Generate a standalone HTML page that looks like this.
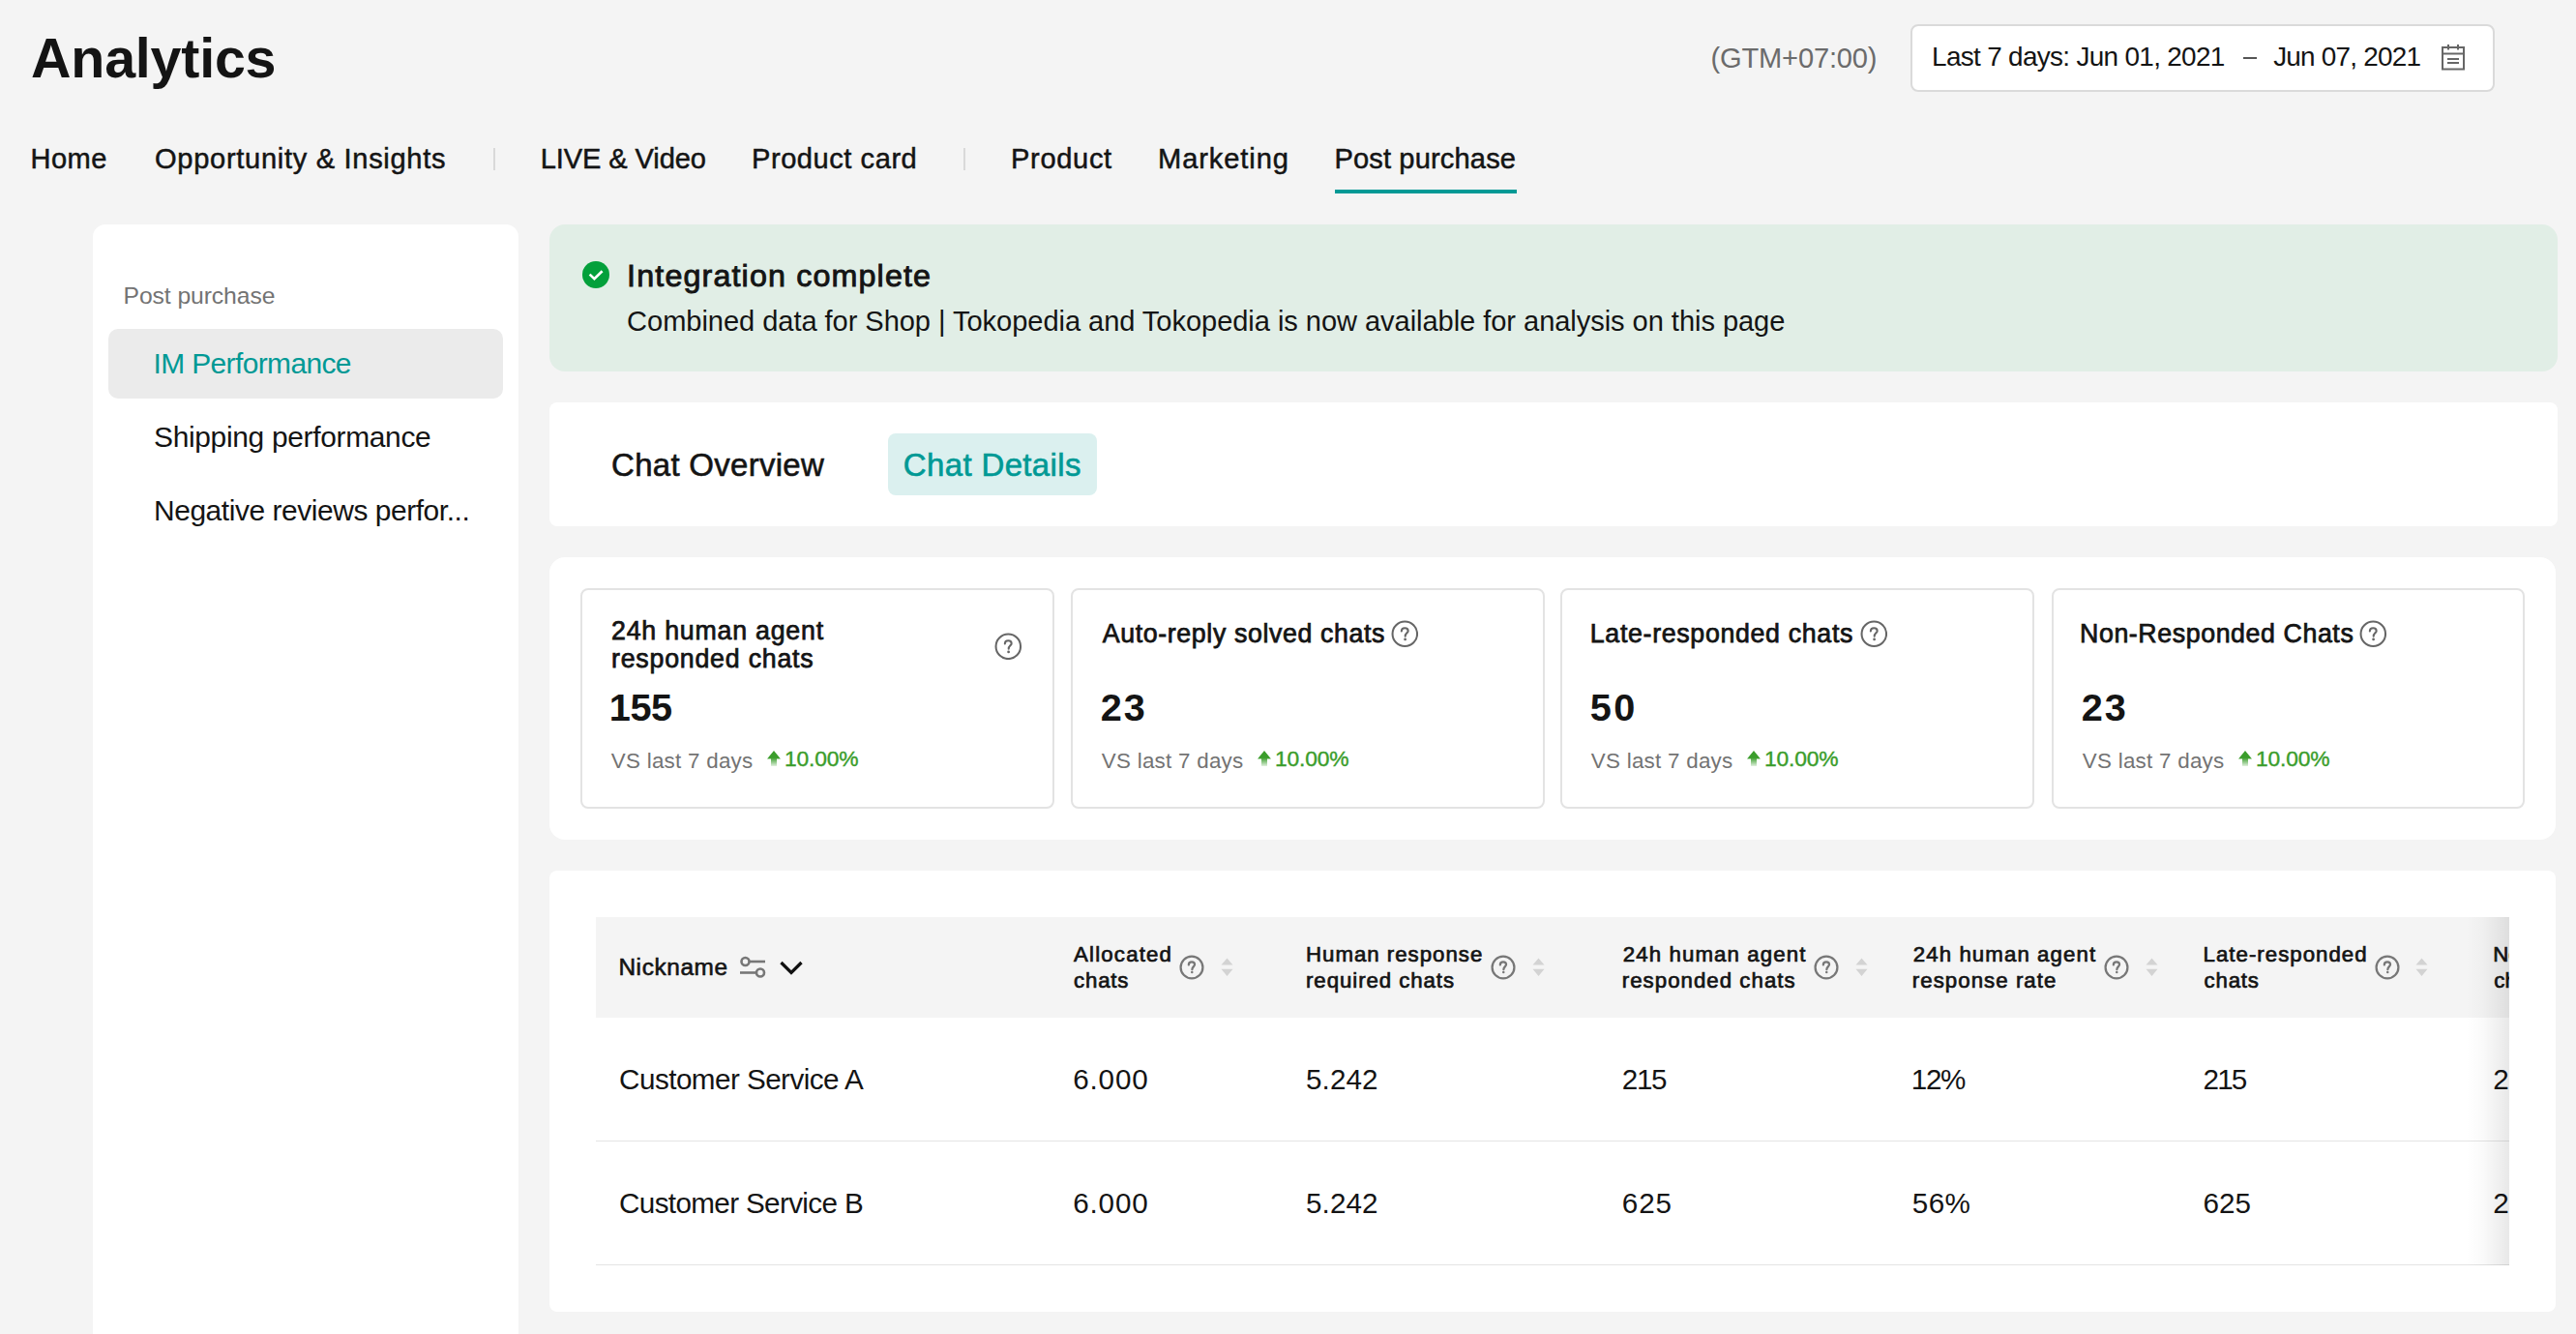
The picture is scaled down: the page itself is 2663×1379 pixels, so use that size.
<!DOCTYPE html>
<html><head><meta charset="utf-8"><style>
html,body{margin:0;padding:0;}
body{width:2663px;height:1379px;overflow:hidden;background:#f4f4f4;position:relative;font-family:"Liberation Sans",sans-serif;}
.t{white-space:nowrap;}
#clip{position:absolute;left:0;top:0;width:2594px;height:1379px;overflow:hidden;}
</style></head><body>
<div style="position:absolute;left:1975px;top:25px;width:604px;height:70px;background:#fff;border-radius:8px;box-sizing:border-box;border:2px solid #dadada;"></div>
<div style="position:absolute;left:2319px;top:59px;width:14px;height:2px;background:#555;border-radius:0px;"></div>
<svg style="position:absolute;left:2523px;top:45px" width="27" height="28" viewBox="0 0 27 28"><g fill="none" stroke="#666" stroke-width="2"><rect x="2" y="4" width="22" height="22.5"/><line x1="2" y1="10.5" x2="24" y2="10.5"/><line x1="8" y1="1" x2="8" y2="6.5"/><line x1="18" y1="1" x2="18" y2="6.5"/><line x1="7" y1="16" x2="19" y2="16"/><line x1="7" y1="20" x2="19" y2="20"/></g></svg>
<div style="position:absolute;left:510px;top:153px;width:2px;height:23px;background:#d9d9d9;border-radius:0px;"></div>
<div style="position:absolute;left:996px;top:153px;width:2px;height:23px;background:#d9d9d9;border-radius:0px;"></div>
<div style="position:absolute;left:1380px;top:196px;width:188px;height:4px;background:#009995;border-radius:0px;"></div>
<div style="position:absolute;left:96px;top:232px;width:440px;height:1300px;background:#fff;border-radius:13px;"></div>
<div style="position:absolute;left:112px;top:340px;width:408px;height:72px;background:#ebebeb;border-radius:10px;"></div>
<div style="position:absolute;left:568px;top:232px;width:2076px;height:152px;background:#e1eee6;border-radius:16px;"></div>
<svg style="position:absolute;left:602px;top:270px" width="28" height="28" viewBox="0 0 28 28"><circle cx="14" cy="14" r="14" fill="#03a03b"/><path d="M7.6 13.6 L12.4 18.2 L20.6 10.2" fill="none" stroke="#fff" stroke-width="2.6"/></svg>
<div style="position:absolute;left:568px;top:416px;width:2076px;height:128px;background:#fff;border-radius:8px;"></div>
<div style="position:absolute;left:918px;top:448px;width:216px;height:64px;background:#dbf0ef;border-radius:8px;"></div>
<div style="position:absolute;left:568px;top:576px;width:2074px;height:292px;background:#fff;border-radius:16px;"></div>
<div style="position:absolute;left:600px;top:608px;width:490px;height:228px;background:#fff;border-radius:8px;box-sizing:border-box;border:2px solid #e3e3e3;"></div>
<svg style="position:absolute;left:792px;top:775px" width="16" height="18" viewBox="0 0 16 18"><defs><linearGradient id="ag0" x1="0" y1="0" x2="0" y2="1"><stop offset="0.45" stop-color="#3a9d2b"/><stop offset="1" stop-color="#3a9d2b" stop-opacity="0.15"/></linearGradient></defs><path d="M8 1 L15 9.5 L11 9.5 L11 17 L5 17 L5 9.5 L1 9.5 Z" fill="url(#ag0)"/></svg>
<div style="position:absolute;left:1107px;top:608px;width:490px;height:228px;background:#fff;border-radius:8px;box-sizing:border-box;border:2px solid #e3e3e3;"></div>
<svg style="position:absolute;left:1299px;top:775px" width="16" height="18" viewBox="0 0 16 18"><defs><linearGradient id="ag1" x1="0" y1="0" x2="0" y2="1"><stop offset="0.45" stop-color="#3a9d2b"/><stop offset="1" stop-color="#3a9d2b" stop-opacity="0.15"/></linearGradient></defs><path d="M8 1 L15 9.5 L11 9.5 L11 17 L5 17 L5 9.5 L1 9.5 Z" fill="url(#ag1)"/></svg>
<div style="position:absolute;left:1613px;top:608px;width:490px;height:228px;background:#fff;border-radius:8px;box-sizing:border-box;border:2px solid #e3e3e3;"></div>
<svg style="position:absolute;left:1805px;top:775px" width="16" height="18" viewBox="0 0 16 18"><defs><linearGradient id="ag2" x1="0" y1="0" x2="0" y2="1"><stop offset="0.45" stop-color="#3a9d2b"/><stop offset="1" stop-color="#3a9d2b" stop-opacity="0.15"/></linearGradient></defs><path d="M8 1 L15 9.5 L11 9.5 L11 17 L5 17 L5 9.5 L1 9.5 Z" fill="url(#ag2)"/></svg>
<div style="position:absolute;left:2121px;top:608px;width:489px;height:228px;background:#fff;border-radius:8px;box-sizing:border-box;border:2px solid #e3e3e3;"></div>
<svg style="position:absolute;left:2313px;top:775px" width="16" height="18" viewBox="0 0 16 18"><defs><linearGradient id="ag3" x1="0" y1="0" x2="0" y2="1"><stop offset="0.45" stop-color="#3a9d2b"/><stop offset="1" stop-color="#3a9d2b" stop-opacity="0.15"/></linearGradient></defs><path d="M8 1 L15 9.5 L11 9.5 L11 17 L5 17 L5 9.5 L1 9.5 Z" fill="url(#ag3)"/></svg>
<svg style="position:absolute;left:1028.2px;top:653.7px" width="28.6" height="28.6" viewBox="0 0 28 28"><circle cx="14" cy="14" r="12.50" fill="none" stroke="#666" stroke-width="2"/><path d="M10.6 11.2 C10.6 9.2 12.1 8 14 8 C15.9 8 17.3 9.2 17.3 10.9 C17.3 12.9 14.4 13.4 14.4 16.3" fill="none" stroke="#666" stroke-width="2" stroke-linecap="round"/><circle cx="14.3" cy="19.5" r="1.35" fill="#666"/></svg>
<svg style="position:absolute;left:1437.9px;top:641.3px" width="28.6" height="28.6" viewBox="0 0 28 28"><circle cx="14" cy="14" r="12.50" fill="none" stroke="#666" stroke-width="2"/><path d="M10.6 11.2 C10.6 9.2 12.1 8 14 8 C15.9 8 17.3 9.2 17.3 10.9 C17.3 12.9 14.4 13.4 14.4 16.3" fill="none" stroke="#666" stroke-width="2" stroke-linecap="round"/><circle cx="14.3" cy="19.5" r="1.35" fill="#666"/></svg>
<svg style="position:absolute;left:1922.8px;top:641.3px" width="28.6" height="28.6" viewBox="0 0 28 28"><circle cx="14" cy="14" r="12.50" fill="none" stroke="#666" stroke-width="2"/><path d="M10.6 11.2 C10.6 9.2 12.1 8 14 8 C15.9 8 17.3 9.2 17.3 10.9 C17.3 12.9 14.4 13.4 14.4 16.3" fill="none" stroke="#666" stroke-width="2" stroke-linecap="round"/><circle cx="14.3" cy="19.5" r="1.35" fill="#666"/></svg>
<svg style="position:absolute;left:2439.1px;top:641.3px" width="28.6" height="28.6" viewBox="0 0 28 28"><circle cx="14" cy="14" r="12.50" fill="none" stroke="#666" stroke-width="2"/><path d="M10.6 11.2 C10.6 9.2 12.1 8 14 8 C15.9 8 17.3 9.2 17.3 10.9 C17.3 12.9 14.4 13.4 14.4 16.3" fill="none" stroke="#666" stroke-width="2" stroke-linecap="round"/><circle cx="14.3" cy="19.5" r="1.35" fill="#666"/></svg>
<div style="position:absolute;left:568px;top:900px;width:2074px;height:456px;background:#fff;border-radius:8px;"></div>
<div style="position:absolute;left:616px;top:948px;width:1978px;height:104px;background:#f4f4f4;border-radius:0px;"></div>
<div style="position:absolute;left:616px;top:1179px;width:1978px;height:1px;background:#e4e4e4;border-radius:0px;"></div>
<div style="position:absolute;left:616px;top:1307px;width:1978px;height:1px;background:#e4e4e4;border-radius:0px;"></div>
<svg style="position:absolute;left:763px;top:987px" width="30" height="26" viewBox="0 0 30 26"><g fill="none" stroke="#777" stroke-width="2.6"><circle cx="7.5" cy="7" r="4"/><line x1="11.5" y1="7" x2="28" y2="7"/><circle cx="23" cy="18.5" r="4"/><line x1="2" y1="18.5" x2="19" y2="18.5"/></g></svg>
<svg style="position:absolute;left:805px;top:992px" width="26" height="17" viewBox="0 0 26 17"><path d="M2.5 3 L13 13.5 L23.5 3" fill="none" stroke="#111" stroke-width="3.3"/></svg>
<svg style="position:absolute;left:1219.0px;top:987.0px" width="26" height="26" viewBox="0 0 28 28"><circle cx="14" cy="14" r="12.30" fill="none" stroke="#777" stroke-width="2.4"/><path d="M10.6 11.2 C10.6 9.2 12.1 8 14 8 C15.9 8 17.3 9.2 17.3 10.9 C17.3 12.9 14.4 13.4 14.4 16.3" fill="none" stroke="#777" stroke-width="2.4" stroke-linecap="round"/><circle cx="14.3" cy="19.5" r="1.35" fill="#777"/></svg>
<svg style="position:absolute;left:1541.0px;top:987.0px" width="26" height="26" viewBox="0 0 28 28"><circle cx="14" cy="14" r="12.30" fill="none" stroke="#777" stroke-width="2.4"/><path d="M10.6 11.2 C10.6 9.2 12.1 8 14 8 C15.9 8 17.3 9.2 17.3 10.9 C17.3 12.9 14.4 13.4 14.4 16.3" fill="none" stroke="#777" stroke-width="2.4" stroke-linecap="round"/><circle cx="14.3" cy="19.5" r="1.35" fill="#777"/></svg>
<svg style="position:absolute;left:1875.0px;top:987.0px" width="26" height="26" viewBox="0 0 28 28"><circle cx="14" cy="14" r="12.30" fill="none" stroke="#777" stroke-width="2.4"/><path d="M10.6 11.2 C10.6 9.2 12.1 8 14 8 C15.9 8 17.3 9.2 17.3 10.9 C17.3 12.9 14.4 13.4 14.4 16.3" fill="none" stroke="#777" stroke-width="2.4" stroke-linecap="round"/><circle cx="14.3" cy="19.5" r="1.35" fill="#777"/></svg>
<svg style="position:absolute;left:2175.0px;top:987.0px" width="26" height="26" viewBox="0 0 28 28"><circle cx="14" cy="14" r="12.30" fill="none" stroke="#777" stroke-width="2.4"/><path d="M10.6 11.2 C10.6 9.2 12.1 8 14 8 C15.9 8 17.3 9.2 17.3 10.9 C17.3 12.9 14.4 13.4 14.4 16.3" fill="none" stroke="#777" stroke-width="2.4" stroke-linecap="round"/><circle cx="14.3" cy="19.5" r="1.35" fill="#777"/></svg>
<svg style="position:absolute;left:2454.8px;top:987.0px" width="26" height="26" viewBox="0 0 28 28"><circle cx="14" cy="14" r="12.30" fill="none" stroke="#777" stroke-width="2.4"/><path d="M10.6 11.2 C10.6 9.2 12.1 8 14 8 C15.9 8 17.3 9.2 17.3 10.9 C17.3 12.9 14.4 13.4 14.4 16.3" fill="none" stroke="#777" stroke-width="2.4" stroke-linecap="round"/><circle cx="14.3" cy="19.5" r="1.35" fill="#777"/></svg>
<svg style="position:absolute;left:1261.5px;top:990px" width="13" height="20" viewBox="0 0 13 20"><path d="M6.5 0.5 L12.5 7.5 L0.5 7.5 Z M0.5 11.8 L12.5 11.8 L6.5 19 Z" fill="#d3d3d3"/></svg>
<svg style="position:absolute;left:1583.5px;top:990px" width="13" height="20" viewBox="0 0 13 20"><path d="M6.5 0.5 L12.5 7.5 L0.5 7.5 Z M0.5 11.8 L12.5 11.8 L6.5 19 Z" fill="#d3d3d3"/></svg>
<svg style="position:absolute;left:1917.5px;top:990px" width="13" height="20" viewBox="0 0 13 20"><path d="M6.5 0.5 L12.5 7.5 L0.5 7.5 Z M0.5 11.8 L12.5 11.8 L6.5 19 Z" fill="#d3d3d3"/></svg>
<svg style="position:absolute;left:2217.5px;top:990px" width="13" height="20" viewBox="0 0 13 20"><path d="M6.5 0.5 L12.5 7.5 L0.5 7.5 Z M0.5 11.8 L12.5 11.8 L6.5 19 Z" fill="#d3d3d3"/></svg>
<svg style="position:absolute;left:2497.2px;top:990px" width="13" height="20" viewBox="0 0 13 20"><path d="M6.5 0.5 L12.5 7.5 L0.5 7.5 Z M0.5 11.8 L12.5 11.8 L6.5 19 Z" fill="#d3d3d3"/></svg>
<div id="title" class="t" style="position:absolute;left:32.10px;top:32.19px;font-size:57.41px;line-height:57.41px;font-weight:700;color:#141414;letter-spacing:-0.225px;">Analytics</div>
<div id="nav_home" class="t" style="position:absolute;left:31.40px;top:149.89px;font-size:29.07px;line-height:29.07px;font-weight:400;color:#141414;letter-spacing:0.533px;-webkit-text-stroke:0.5px #141414;">Home</div>
<div id="nav_opp" class="t" style="position:absolute;left:160.00px;top:149.89px;font-size:29.07px;line-height:29.07px;font-weight:400;color:#141414;letter-spacing:0.695px;-webkit-text-stroke:0.5px #141414;">Opportunity &amp; Insights</div>
<div id="nav_live" class="t" style="position:absolute;left:558.80px;top:149.89px;font-size:29.07px;line-height:29.07px;font-weight:400;color:#141414;letter-spacing:-0.109px;-webkit-text-stroke:0.5px #141414;">LIVE &amp; Video</div>
<div id="nav_pc" class="t" style="position:absolute;left:777.00px;top:149.89px;font-size:29.07px;line-height:29.07px;font-weight:400;color:#141414;letter-spacing:0.545px;-webkit-text-stroke:0.5px #141414;">Product card</div>
<div id="nav_prod" class="t" style="position:absolute;left:1045.00px;top:149.89px;font-size:29.07px;line-height:29.07px;font-weight:400;color:#141414;letter-spacing:0.667px;-webkit-text-stroke:0.5px #141414;">Product</div>
<div id="nav_mkt" class="t" style="position:absolute;left:1197.10px;top:149.89px;font-size:29.07px;line-height:29.07px;font-weight:400;color:#141414;letter-spacing:0.900px;-webkit-text-stroke:0.5px #141414;">Marketing</div>
<div id="nav_pp" class="t" style="position:absolute;left:1379.40px;top:149.89px;font-size:29.07px;line-height:29.07px;font-weight:400;color:#141414;letter-spacing:0.150px;-webkit-text-stroke:0.5px #141414;">Post purchase</div>
<div id="gtm" class="t" style="position:absolute;left:1768.60px;top:45.69px;font-size:29.07px;line-height:29.07px;font-weight:400;color:#6b6b6b;letter-spacing:-0.180px;">(GTM+07:00)</div>
<div id="date1" class="t" style="position:absolute;left:1997.10px;top:45.47px;font-size:27.91px;line-height:27.91px;font-weight:400;color:#141414;letter-spacing:-0.683px;">Last 7 days: Jun 01, 2021</div>
<div id="date2" class="t" style="position:absolute;left:2350.20px;top:45.47px;font-size:27.91px;line-height:27.91px;font-weight:400;color:#141414;letter-spacing:-0.782px;">Jun 07, 2021</div>
<div id="sb_head" class="t" style="position:absolute;left:127.50px;top:294.28px;font-size:24.71px;line-height:24.71px;font-weight:400;color:#737373;letter-spacing:-0.083px;">Post purchase</div>
<div id="sb_im" class="t" style="position:absolute;left:158.50px;top:360.65px;font-size:29.94px;line-height:29.94px;font-weight:400;color:#009995;letter-spacing:-0.615px;">IM Performance</div>
<div id="sb_ship" class="t" style="position:absolute;left:159.00px;top:437.05px;font-size:29.94px;line-height:29.94px;font-weight:400;color:#141414;letter-spacing:-0.326px;">Shipping performance</div>
<div id="sb_neg" class="t" style="position:absolute;left:159.00px;top:512.95px;font-size:29.94px;line-height:29.94px;font-weight:400;color:#141414;letter-spacing:-0.440px;">Negative reviews perfor...</div>
<div id="ban_title" class="t" style="position:absolute;left:648.10px;top:268.78px;font-size:32.27px;line-height:32.27px;font-weight:400;color:#141414;letter-spacing:1.137px;-webkit-text-stroke:0.9px #141414;">Integration complete</div>
<div id="ban_text" class="t" style="position:absolute;left:648.10px;top:318.29px;font-size:29.07px;line-height:29.07px;font-weight:400;color:#141414;letter-spacing:-0.053px;">Combined data for Shop | Tokopedia and Tokopedia is now available for analysis on this page</div>
<div id="tab_ov" class="t" style="position:absolute;left:632.10px;top:464.16px;font-size:32.99px;line-height:32.99px;font-weight:400;color:#141414;letter-spacing:0.283px;-webkit-text-stroke:0.6px #141414;">Chat Overview</div>
<div id="tab_det" class="t" style="position:absolute;left:933.80px;top:464.36px;font-size:32.99px;line-height:32.99px;font-weight:400;color:#009995;letter-spacing:0.364px;-webkit-text-stroke:0.6px #009995;">Chat Details</div>
<div id="c1_t1" class="t" style="position:absolute;left:632.00px;top:639.36px;font-size:26.74px;line-height:26.74px;font-weight:400;color:#141414;letter-spacing:0.786px;-webkit-text-stroke:0.75px #141414;">24h human agent</div>
<div id="c1_t2" class="t" style="position:absolute;left:632.00px;top:667.56px;font-size:26.74px;line-height:26.74px;font-weight:400;color:#141414;letter-spacing:0.786px;-webkit-text-stroke:0.75px #141414;">responded chats</div>
<div id="c2_t" class="t" style="position:absolute;left:1139.80px;top:642.06px;font-size:26.74px;line-height:26.74px;font-weight:400;color:#141414;letter-spacing:0.627px;-webkit-text-stroke:0.75px #141414;">Auto-reply solved chats</div>
<div id="c3_t" class="t" style="position:absolute;left:1643.80px;top:642.06px;font-size:26.74px;line-height:26.74px;font-weight:400;color:#141414;letter-spacing:0.684px;-webkit-text-stroke:0.75px #141414;">Late-responded chats</div>
<div id="c4_t" class="t" style="position:absolute;left:2150.00px;top:642.06px;font-size:26.74px;line-height:26.74px;font-weight:400;color:#141414;letter-spacing:0.600px;-webkit-text-stroke:0.75px #141414;">Non-Responded Chats</div>
<div id="c1_v" class="t" style="position:absolute;left:629.80px;top:712.40px;font-size:39.68px;line-height:39.68px;font-weight:700;color:#141414;letter-spacing:-0.400px;">155</div>
<div id="c1_vs" class="t" style="position:absolute;left:631.80px;top:776.35px;font-size:22.38px;line-height:22.38px;font-weight:400;color:#737373;letter-spacing:0.262px;">VS last 7 days</div>
<div id="c1_pct" class="t" style="position:absolute;left:811.10px;top:772.68px;font-size:22.82px;line-height:22.82px;font-weight:400;color:#3a9d2b;letter-spacing:-0.200px;-webkit-text-stroke:0.4px #3a9d2b;">10.00%</div>
<div id="c2_v" class="t" style="position:absolute;left:1137.80px;top:712.40px;font-size:39.68px;line-height:39.68px;font-weight:700;color:#141414;letter-spacing:2.000px;">23</div>
<div id="c2_vs" class="t" style="position:absolute;left:1138.80px;top:776.35px;font-size:22.38px;line-height:22.38px;font-weight:400;color:#737373;letter-spacing:0.262px;">VS last 7 days</div>
<div id="c2_pct" class="t" style="position:absolute;left:1318.10px;top:772.68px;font-size:22.82px;line-height:22.82px;font-weight:400;color:#3a9d2b;letter-spacing:-0.200px;-webkit-text-stroke:0.4px #3a9d2b;">10.00%</div>
<div id="c3_v" class="t" style="position:absolute;left:1643.80px;top:712.40px;font-size:39.68px;line-height:39.68px;font-weight:700;color:#141414;letter-spacing:2.500px;">50</div>
<div id="c3_vs" class="t" style="position:absolute;left:1644.80px;top:776.35px;font-size:22.38px;line-height:22.38px;font-weight:400;color:#737373;letter-spacing:0.262px;">VS last 7 days</div>
<div id="c3_pct" class="t" style="position:absolute;left:1824.10px;top:772.68px;font-size:22.82px;line-height:22.82px;font-weight:400;color:#3a9d2b;letter-spacing:-0.200px;-webkit-text-stroke:0.4px #3a9d2b;">10.00%</div>
<div id="c4_v" class="t" style="position:absolute;left:2151.80px;top:712.40px;font-size:39.68px;line-height:39.68px;font-weight:700;color:#141414;letter-spacing:1.800px;">23</div>
<div id="c4_vs" class="t" style="position:absolute;left:2152.80px;top:776.35px;font-size:22.38px;line-height:22.38px;font-weight:400;color:#737373;letter-spacing:0.262px;">VS last 7 days</div>
<div id="c4_pct" class="t" style="position:absolute;left:2332.10px;top:772.68px;font-size:22.82px;line-height:22.82px;font-weight:400;color:#3a9d2b;letter-spacing:-0.200px;-webkit-text-stroke:0.4px #3a9d2b;">10.00%</div>
<div id="th_nick" class="t" style="position:absolute;left:639.40px;top:987.52px;font-size:24.42px;line-height:24.42px;font-weight:400;color:#141414;letter-spacing:0.600px;-webkit-text-stroke:0.6px #141414;">Nickname</div>
<div id="r0_0" class="t" style="position:absolute;left:640.10px;top:1100.99px;font-size:29.65px;line-height:29.65px;font-weight:400;color:#141414;letter-spacing:-0.541px;">Customer Service A</div>
<div id="r1_0" class="t" style="position:absolute;left:640.10px;top:1228.89px;font-size:29.65px;line-height:29.65px;font-weight:400;color:#141414;letter-spacing:-0.647px;">Customer Service B</div>
<div id="clip">
<div id="th0_1" class="t" style="position:absolute;left:1110.10px;top:975.57px;font-size:22.24px;line-height:22.24px;font-weight:400;color:#141414;letter-spacing:1.175px;-webkit-text-stroke:0.7px #141414;">Allocated</div>
<div id="th0_2" class="t" style="position:absolute;left:1110.10px;top:1003.47px;font-size:22.24px;line-height:22.24px;font-weight:400;color:#141414;letter-spacing:0.800px;-webkit-text-stroke:0.7px #141414;">chats</div>
<div id="th1_1" class="t" style="position:absolute;left:1350.00px;top:975.57px;font-size:22.24px;line-height:22.24px;font-weight:400;color:#141414;letter-spacing:1.000px;-webkit-text-stroke:0.7px #141414;">Human response</div>
<div id="th1_2" class="t" style="position:absolute;left:1350.00px;top:1003.47px;font-size:22.24px;line-height:22.24px;font-weight:400;color:#141414;letter-spacing:0.938px;-webkit-text-stroke:0.7px #141414;">required chats</div>
<div id="th2_1" class="t" style="position:absolute;left:1677.80px;top:975.57px;font-size:22.24px;line-height:22.24px;font-weight:400;color:#141414;letter-spacing:1.114px;-webkit-text-stroke:0.7px #141414;">24h human agent</div>
<div id="th2_2" class="t" style="position:absolute;left:1676.80px;top:1003.47px;font-size:22.24px;line-height:22.24px;font-weight:400;color:#141414;letter-spacing:1.029px;-webkit-text-stroke:0.7px #141414;">responded chats</div>
<div id="th3_1" class="t" style="position:absolute;left:1977.80px;top:975.57px;font-size:22.24px;line-height:22.24px;font-weight:400;color:#141414;letter-spacing:1.086px;-webkit-text-stroke:0.7px #141414;">24h human agent</div>
<div id="th3_2" class="t" style="position:absolute;left:1976.80px;top:1003.47px;font-size:22.24px;line-height:22.24px;font-weight:400;color:#141414;letter-spacing:1.050px;-webkit-text-stroke:0.7px #141414;">response rate</div>
<div id="th4_1" class="t" style="position:absolute;left:2277.60px;top:975.57px;font-size:22.24px;line-height:22.24px;font-weight:400;color:#141414;letter-spacing:1.015px;-webkit-text-stroke:0.7px #141414;">Late-responded</div>
<div id="th4_2" class="t" style="position:absolute;left:2278.60px;top:1003.47px;font-size:22.24px;line-height:22.24px;font-weight:400;color:#141414;letter-spacing:0.800px;-webkit-text-stroke:0.7px #141414;">chats</div>
<div id="th5_1" class="t" style="position:absolute;left:2577.30px;top:975.57px;font-size:22.24px;line-height:22.24px;font-weight:400;color:#141414;-webkit-text-stroke:0.7px #141414;">Non-Responded</div>
<div id="th5_2" class="t" style="position:absolute;left:2578.30px;top:1003.47px;font-size:22.24px;line-height:22.24px;font-weight:400;color:#141414;-webkit-text-stroke:0.7px #141414;">chats</div>
<div id="r0_1" class="t" style="position:absolute;left:1109.20px;top:1100.99px;font-size:29.65px;line-height:29.65px;font-weight:400;color:#141414;letter-spacing:0.850px;">6.000</div>
<div id="r0_2" class="t" style="position:absolute;left:1350.00px;top:1100.99px;font-size:29.65px;line-height:29.65px;font-weight:400;color:#141414;letter-spacing:0.100px;">5.242</div>
<div id="r0_3" class="t" style="position:absolute;left:1676.80px;top:1100.99px;font-size:29.65px;line-height:29.65px;font-weight:400;color:#141414;letter-spacing:-1.400px;">215</div>
<div id="r0_4" class="t" style="position:absolute;left:1975.80px;top:1100.99px;font-size:29.65px;line-height:29.65px;font-weight:400;color:#141414;letter-spacing:-1.400px;">12%</div>
<div id="r0_5" class="t" style="position:absolute;left:2277.60px;top:1100.99px;font-size:29.65px;line-height:29.65px;font-weight:400;color:#141414;letter-spacing:-1.900px;">215</div>
<div id="r0_6" class="t" style="position:absolute;left:2577.30px;top:1100.99px;font-size:29.65px;line-height:29.65px;font-weight:400;color:#141414;">215</div>
<div id="r1_1" class="t" style="position:absolute;left:1109.20px;top:1228.89px;font-size:29.65px;line-height:29.65px;font-weight:400;color:#141414;letter-spacing:0.850px;">6.000</div>
<div id="r1_2" class="t" style="position:absolute;left:1350.00px;top:1228.89px;font-size:29.65px;line-height:29.65px;font-weight:400;color:#141414;letter-spacing:0.100px;">5.242</div>
<div id="r1_3" class="t" style="position:absolute;left:1676.80px;top:1228.89px;font-size:29.65px;line-height:29.65px;font-weight:400;color:#141414;letter-spacing:0.900px;">625</div>
<div id="r1_4" class="t" style="position:absolute;left:1976.80px;top:1228.89px;font-size:29.65px;line-height:29.65px;font-weight:400;color:#141414;letter-spacing:0.400px;">56%</div>
<div id="r1_5" class="t" style="position:absolute;left:2277.60px;top:1228.89px;font-size:29.65px;line-height:29.65px;font-weight:400;color:#141414;">625</div>
<div id="r1_6" class="t" style="position:absolute;left:2577.30px;top:1228.89px;font-size:29.65px;line-height:29.65px;font-weight:400;color:#141414;">215</div>
</div>
<div style="position:absolute;left:2549px;top:948px;width:45px;height:360px;background:linear-gradient(to right, rgba(0,0,0,0), rgba(0,0,0,0.02) 40%, rgba(0,0,0,0.09));"></div>
</body></html>
